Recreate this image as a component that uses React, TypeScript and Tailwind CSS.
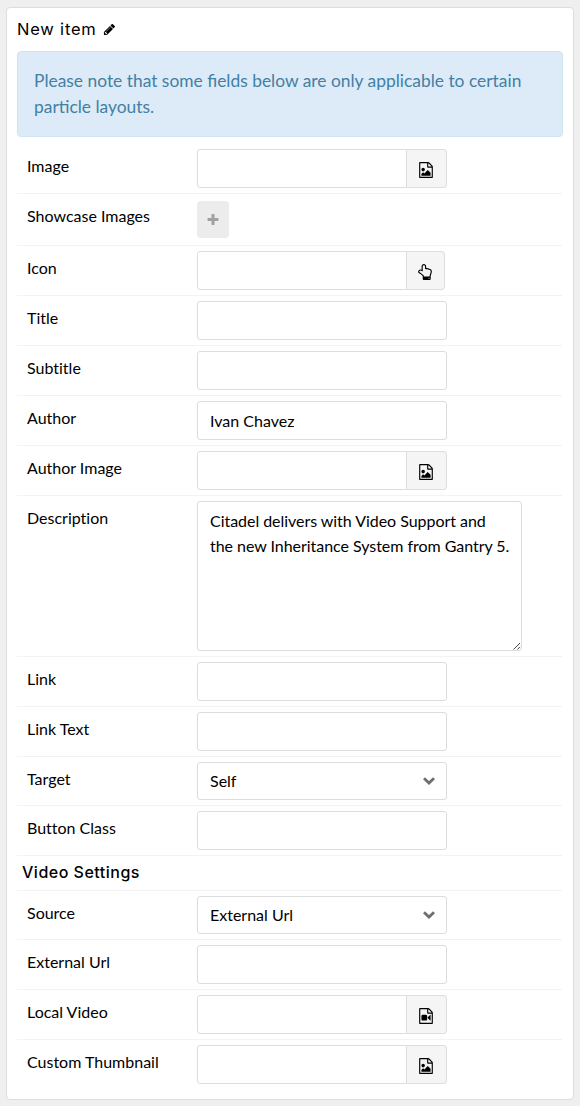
import React from "react";

const PATHS = {
  pencil:
    "M491 1536l91-91-235-235-91 91v107h128v128h107zm523-928q0-22-22-22-10 0-17 7l-542 542q-7 7-7 17 0 22 22 22 10 0 17-7l542-542q7-7 7-17zm-54-192l416 416-832 832h-416v-416zm683 96q0 53-37 90l-166 166-416-416 166-165q36-38 90-38 53 0 91 38l235 234q37 39 37 91z",
  image:
    "M1596 380q28 28 48 76t20 88v1152q0 40-28 68t-68 28h-1344q-40 0-68-28t-28-68v-1600q0-40 28-68t68-28h896q40 0 88 20t76 48zm-444-244v376h376q-10-29-22-41l-313-313q-12-12-41-22zm384 1528v-1024h-416q-40 0-68-28t-28-68v-416h-768v1536h1280zm-128-448v320h-1024v-192l192-192 128 128 384-384zm-832-192q-80 0-136-56t-56-136 56-136 136-56 136 56 56 136-56 136-136 56z",
  video:
    "M1596 380q28 28 48 76t20 88v1152q0 40-28 68t-68 28h-1344q-40 0-68-28t-28-68v-1600q0-40 28-68t68-28h896q40 0 88 20t76 48zm-444-244v376h376q-10-29-22-41l-313-313q-12-12-41-22zm384 1528v-1024h-416q-40 0-68-28t-28-68v-416h-768v1536h1280zm-640-896q52 0 90 38t38 90v384q0 52-38 90t-90 38h-384q-52 0-90-38t-38-90v-384q0-52 38-90t90-38h384zm492 2q20 8 20 30v576q0 22-20 30-8 2-12 2-14 0-23-9l-265-266v-90l265-266q9-9 23-9 4 0 12 2z",
  plus:
    "M1600 736v192q0 40-28 68t-68 28h-416v416q0 40-28 68t-68 28h-192q-40 0-68-28t-28-68v-416h-416q-40 0-68-28t-28-68v-192q0-40 28-68t68-28h416v-416q0-40 28-68t68-28h192q40 0 68 28t28 68v416h416q40 0 68 28t28 68z",
  hand:
    "M1408 1600q0-26-19-45t-45-19-45 19-19 45 19 45 45 19 45-19 19-45zm128-764q0-189-167-189-26 0-56 5-16-30-52.5-47.5t-73.5-17.5-69 18q-50-53-119-53-25 0-55.5 10t-47.5 25v-331q0-52-38-90t-90-38q-51 0-89.5 39t-38.5 89v576q-20 0-48.5-15t-55-33-68-33-84.5-15q-67 0-97.5 44.5t-30.5 115.5q0 24 139 90 44 24 65 37 64 40 145 112 81 71 106 101 57 69 57 140v32h640v-32q0-72 32-167t64-193.5 32-179.5zm128-5q0 133-69 322-59 164-59 223v288q0 53-37.5 90.5t-90.5 37.5h-640q-53 0-90.5-37.5t-37.5-90.5v-288q0-10-4.5-21.5t-14-23.5-18-22.5-22.5-24-21.5-20.5-21.5-19-17-14q-74-65-129-100-21-13-62-33t-72-37-63-40.5-49.5-55-17.5-69.5q0-125 67-206.5t189-81.5q68 0 128 22v-374q0-104 76-180t179-76q105 0 181 75.5t76 180.5v169q62 4 119 37 21-3 43-3 101 0 178 60 139-1 219.5 85t80.5 227z",
};

function Icon({ name, className }: { name: keyof typeof PATHS; className: string }) {
  return (
    <svg viewBox="0 0 1792 1792" fill="currentColor" className={className} aria-hidden="true">
      <path d={PATHS[name]} />
    </svg>
  );
}

function Row({ label, last, children }: { label: string; last?: boolean; children: React.ReactNode }) {
  return (
    <div className={`flex items-start pt-[5px] pb-[5px] ${last ? "" : "border-b border-[#f3f3f3]"}`}>
      <label className="w-[180px] shrink-0 pt-[5px] pl-2.5 leading-6">{label}</label>
      {children}
    </div>
  );
}

function TextInput({ value }: { value?: string }) {
  return (
    <input
      type="text"
      defaultValue={value}
      className="h-[39px] w-[250px] rounded-[3px] border border-[#dddddd] bg-white px-3 outline-none"
    />
  );
}

function PickerInput({ icon }: { icon: "image" | "video" | "hand" }) {
  return (
    <div className="flex h-[39px]">
      <input
        type="text"
        className="w-[210px] rounded-l-[3px] border border-[#dddddd] bg-white px-3 outline-none"
      />
      <button
        type="button"
        className={`flex items-center justify-center rounded-r-[4px] border border-l-0 border-[#dddddd] bg-[#f5f5f5] pt-[3px] pr-[2px] text-black ${icon === "hand" ? "w-[38px]" : "w-10"}`}
      >
        <Icon name={icon} className="size-4" />
      </button>
    </div>
  );
}

function SelectBox({ value }: { value: string }) {
  return (
    <div className="flex h-[38px] w-[250px] items-center justify-between rounded-[3px] border border-[#dddddd] bg-white pr-[11px] pl-3">
      <span className="pb-px">{value}</span>
      <svg viewBox="0 0 12 8" className="h-2 w-3 text-[#6f6f6f]" fill="none" stroke="currentColor" strokeWidth="2.8">
        <path d="M1 1.2 L6 6 L11 1.2" />
      </svg>
    </div>
  );
}

export default function App() {
  return (
    <div className="h-[1106px] bg-[#efefef] pt-[7px] pr-[6px] pl-[6px] font-['Lato',sans-serif] text-base text-black antialiased [font-variant-ligatures:none]">
      <div className="h-[1093px] rounded-[4px] border border-[#dddddd] bg-white pr-[11px] pl-[10px]">
        <h4 className="flex h-[43px] items-center font-['Inter',sans-serif] text-[16.5px] tracking-[0.8px]">
          New item
          <Icon name="pencil" className="ml-[6px] size-[13px]" />
        </h4>
        <div className="mr-[-1px] mb-[7px] h-[86px] rounded-[4px] border border-[#cfe5ee] bg-[#dcebf7] px-4 pt-4 text-[17.4px] leading-[26px] text-[#437fa4] [font-variant-ligatures:normal]">
          Please note that some fields below are only applicable to certain particle layouts.
        </div>

        <Row label="Image">
          <PickerInput icon="image" />
        </Row>
        <Row label="Showcase Images">
          <button
            type="button"
            className="mt-[2px] mb-[2px] flex h-[37px] w-8 items-center justify-center rounded-[4px] bg-[#ececec] text-[#a0a0a0]"
          >
            <Icon name="plus" className="size-[14px]" />
          </button>
        </Row>
        <Row label="Icon">
          <PickerInput icon="hand" />
        </Row>
        <Row label="Title">
          <TextInput />
        </Row>
        <Row label="Subtitle">
          <TextInput />
        </Row>
        <Row label="Author">
          <TextInput value="Ivan Chavez" />
        </Row>
        <Row label="Author Image">
          <PickerInput icon="image" />
        </Row>
        <Row label="Description">
          <div className="relative h-[150px] w-[325px]">
            <textarea
              className="block h-full w-full resize-none rounded-[3px] border border-[#dddddd] bg-white pt-[6px] pr-1 pl-3 leading-[25px] tracking-[-0.04px] outline-none"
              defaultValue={"Citadel delivers with Video Support and\nthe new Inheritance System from Gantry 5."}
            />
            <svg viewBox="0 0 8 8" className="absolute right-[1px] bottom-[1px] size-2" stroke="#444" strokeWidth="1" fill="none">
              <path d="M0.5 7.5L7 1M4.3 7.5L7 4.8" />
            </svg>
          </div>
        </Row>
        <Row label="Link">
          <TextInput />
        </Row>
        <Row label="Link Text">
          <TextInput />
        </Row>
        <Row label="Target">
          <SelectBox value="Self" />
        </Row>
        <Row label="Button Class">
          <TextInput />
        </Row>
        <h4 className="flex h-[35px] items-center border-b border-[#f3f3f3] pb-[2px] pl-[5px] font-['Inter',sans-serif] text-base font-medium tracking-[0.5px]">
          Video Settings
        </h4>
        <Row label="Source">
          <SelectBox value="External Url" />
        </Row>
        <Row label="External Url">
          <TextInput />
        </Row>
        <Row label="Local Video">
          <PickerInput icon="video" />
        </Row>
        <Row label="Custom Thumbnail" last>
          <PickerInput icon="image" />
        </Row>
      </div>
    </div>
  );
}
